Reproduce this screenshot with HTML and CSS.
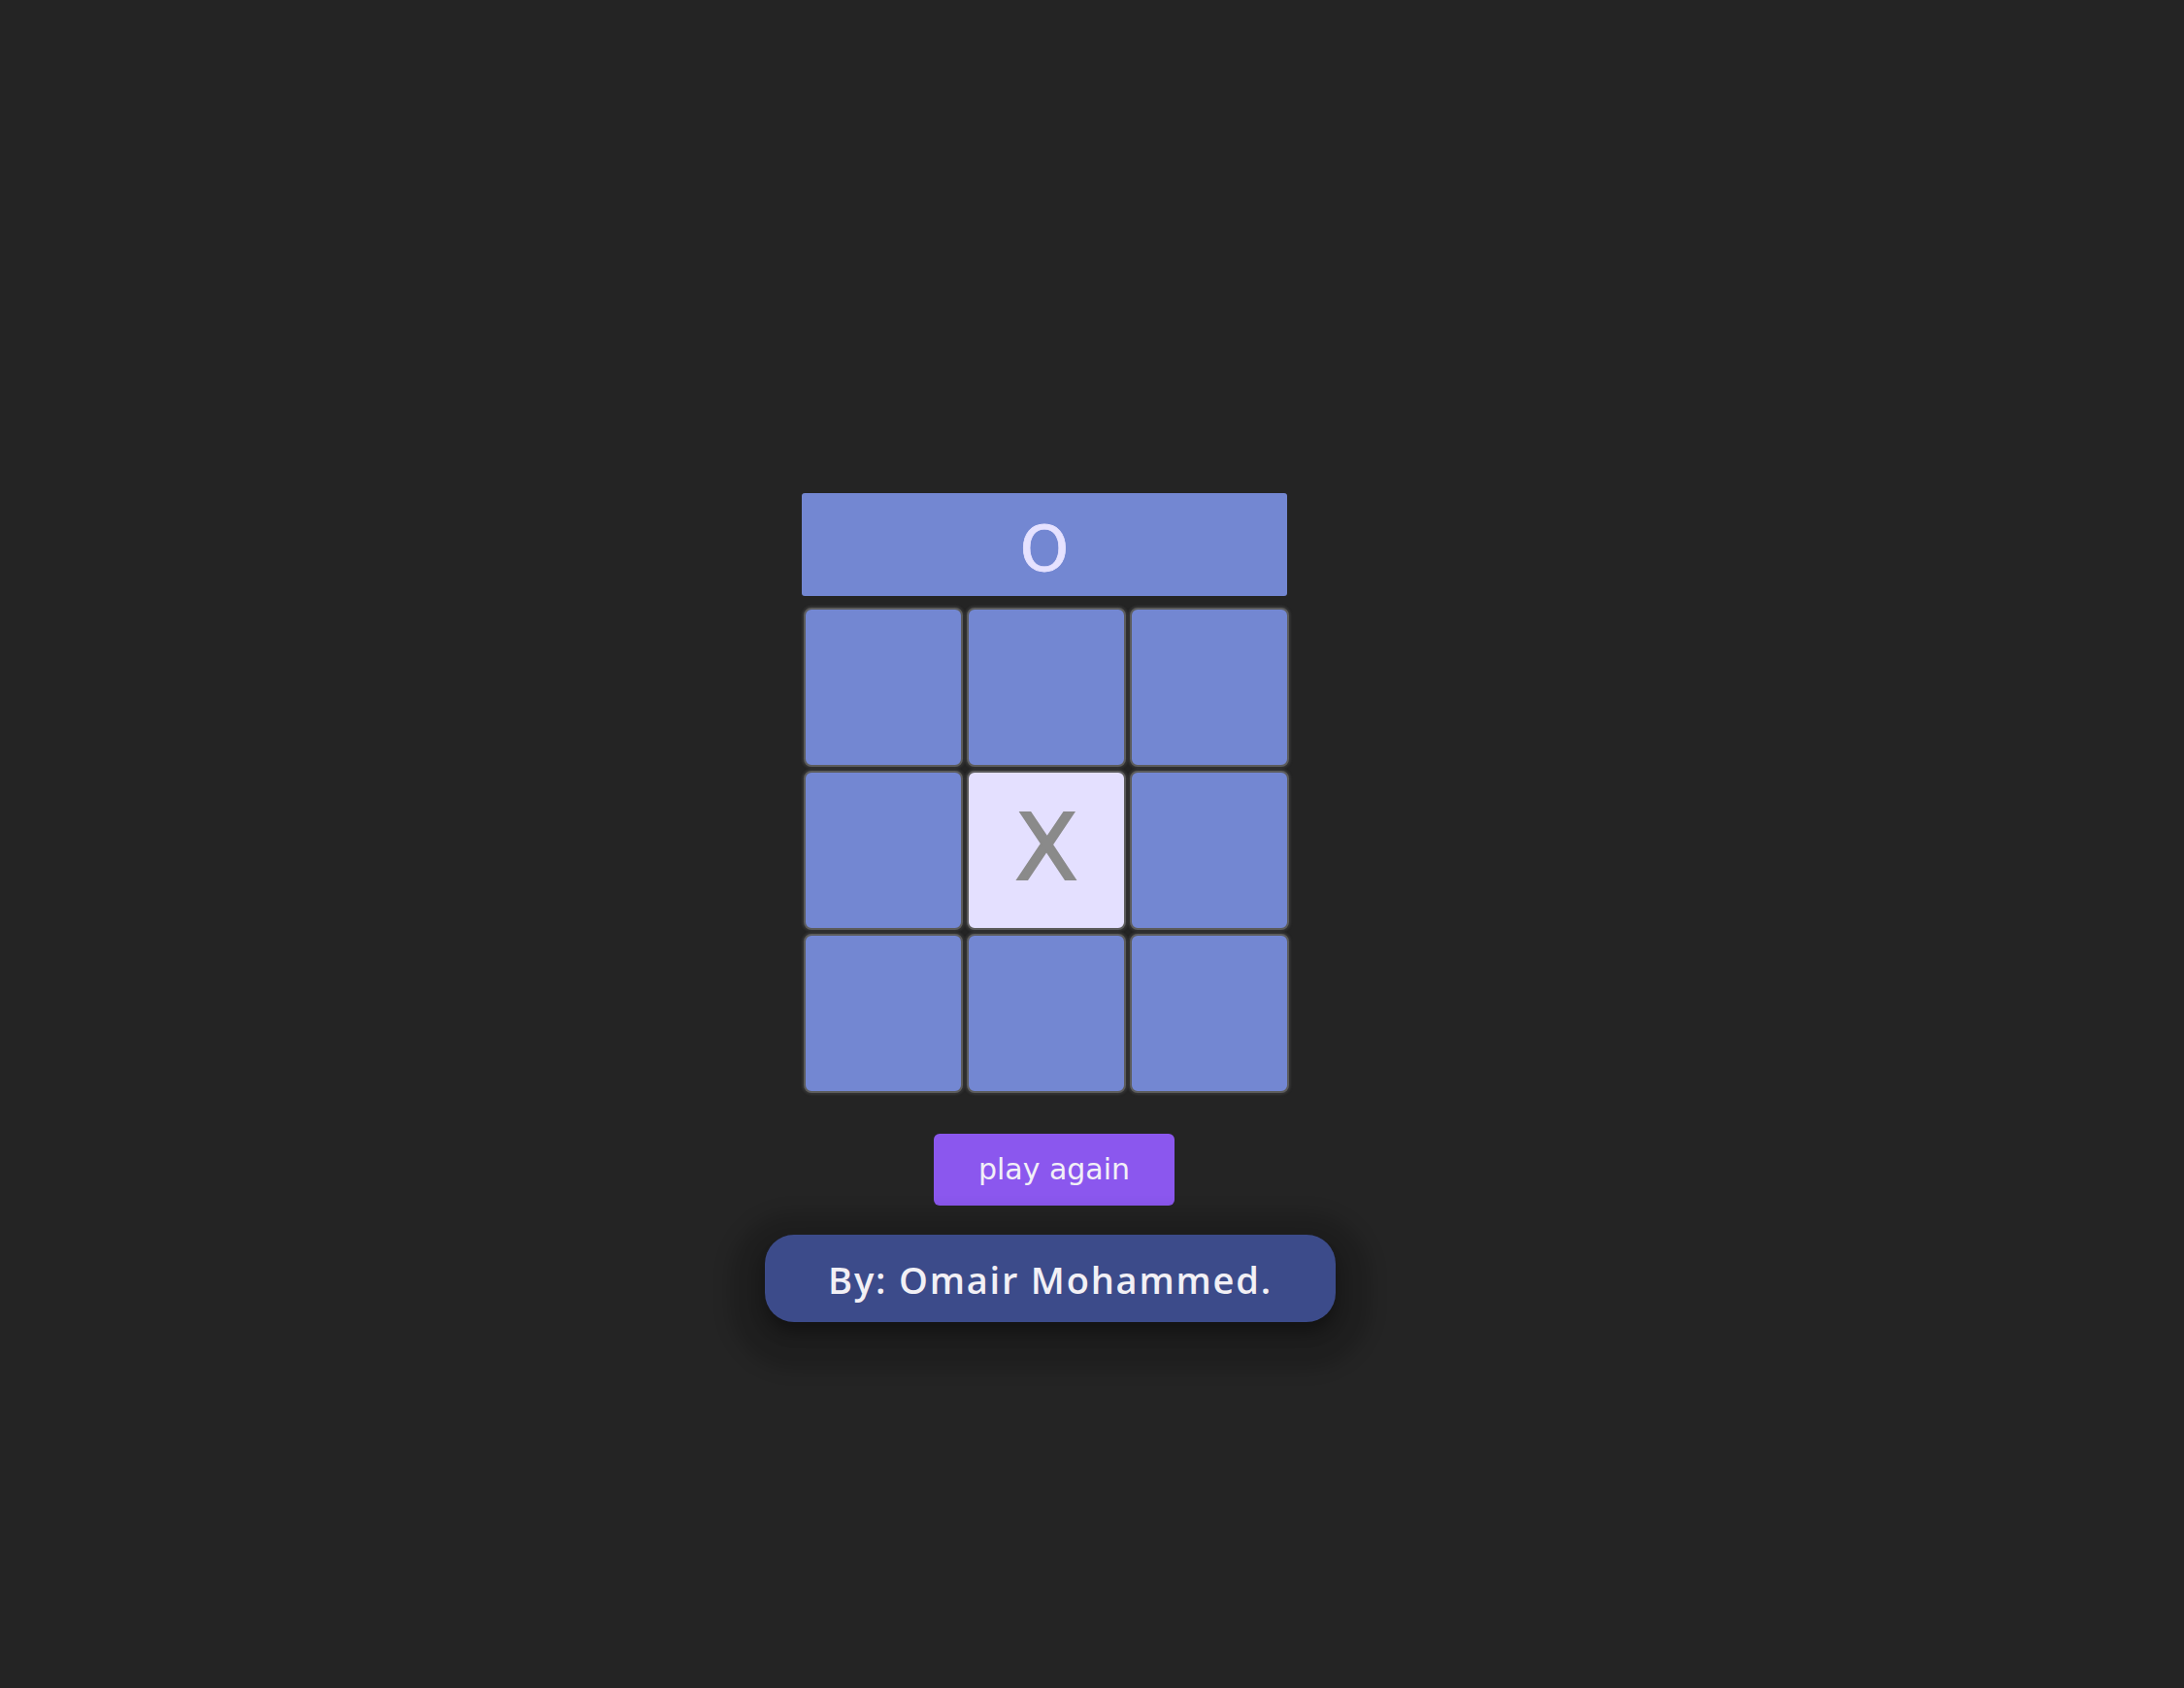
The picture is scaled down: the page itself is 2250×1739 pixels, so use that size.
FILE: index.html
```html
<!DOCTYPE html>
<html lang="en">
<head>
<meta charset="utf-8">
<title>Tic Tac Toe</title>
<link rel="stylesheet" href="styles.css">
</head>
<body>
<main class="page">
  <div class="turn">O</div>
  <div class="board">
    <button class="cell"></button>
    <button class="cell"></button>
    <button class="cell"></button>
    <button class="cell"></button>
    <button class="cell cell-x">X</button>
    <button class="cell"></button>
    <button class="cell"></button>
    <button class="cell"></button>
    <button class="cell"></button>
  </div>
  <button class="again">play again</button>
  <footer class="credit">By: Omair Mohammed.</footer>
</main>
</body>
</html>
```

FILE: styles.css
```css
html, body {
  margin: 0;
  padding: 0;
  background: #242424;
}

.page {
  min-height: 1739px;
  box-sizing: border-box;
  display: flex;
  flex-direction: column;
  align-items: center;
  padding-top: 508px;
  padding-right: 90px;
}

.turn {
  width: 500px;
  height: 106px;
  margin-right: 8px;
  background: #7387d2;
  border-radius: 3px;
  color: #e6e2ff;
  font-family: "DejaVu Sans", sans-serif;
  font-size: 64px;
  -webkit-text-stroke: 0.8px #e6e2ff;
  display: flex;
  align-items: center;
  justify-content: center;
  padding-top: 10px;
  box-sizing: border-box;
}

.board {
  margin-top: 12px;
  margin-right: 4px;
  display: grid;
  grid-template-columns: repeat(3, 164px);
  grid-template-rows: repeat(3, 164px);
  gap: 4px;
}

.cell {
  margin: 0;
  padding: 0;
  box-sizing: border-box;
  width: 164px;
  height: 164px;
  border: 2px solid #5c5c5c;
  border-radius: 8px;
  background: #7387d2;
  box-shadow: 0 0 2px 2px #333333;
  font-family: "DejaVu Sans", sans-serif;
  font-size: 95px;
  color: #8a8a8a;
  -webkit-text-stroke: 2px #8a8a8a;
  line-height: 1;
}

.cell-x {
  background: #e4e0ff;
  padding-bottom: 6px;
}

.again {
  margin-top: 42px;
  margin-left: 12px;
  width: 248px;
  height: 74px;
  border: none;
  border-radius: 6px;
  background: #8b57ee;
  color: #f2f0f7;
  font-family: "DejaVu Sans", sans-serif;
  font-size: 30px;
  padding: 0 0 2px;
}

.credit {
  margin-top: 30px;
  margin-left: 4px;
  width: 588px;
  height: 90px;
  border-radius: 30px;
  background: #3c4b8a;
  color: #f2f0f5;
  font-family: "Open Sans", sans-serif;
  font-weight: 600;
  font-size: 38px;
  letter-spacing: 1.8px;
  display: flex;
  align-items: center;
  justify-content: center;
  padding-top: 2px;
  box-sizing: border-box;
  box-shadow: 0 10px 16px rgba(0, 0, 0, 0.35), 0 13px 18px 36px rgba(0, 0, 0, 0.17);
}
```
